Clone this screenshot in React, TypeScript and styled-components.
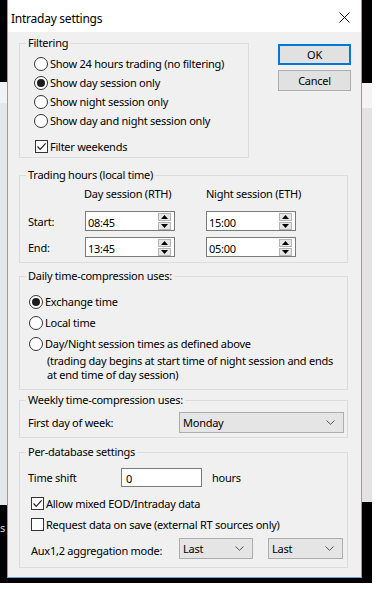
import styled, { createGlobalStyle } from "styled-components";

const GlobalStyle = createGlobalStyle`
  html, body {
    margin: 0;
    padding: 0;
    background: #ffffff;
  }
  body {
    font-family: "Noto Sans", "Liberation Sans", sans-serif;
    font-size: 11px;
    letter-spacing: -0.25px;
    color: #000;
  }
`;

function Radio({ on, label }: { on?: boolean; label: string }) {
  return (
    <OptionRow>
      <RadioCircle $on={on} />
      <span>{label}</span>
    </OptionRow>
  );
}

function Check({ on, label, indent }: { on?: boolean; label: string; indent?: number }) {
  return (
    <OptionRow $indent={indent}>
      <CheckBox>
        {on && (
          <svg width="11" height="11" viewBox="0 0 11 11">
            <path d="M1.5 5.5 L4.2 8.3 L9.6 2.3" fill="none" stroke="#222" strokeWidth="1.2" />
          </svg>
        )}
      </CheckBox>
      <span>{label}</span>
    </OptionRow>
  );
}

function Spin({ value }: { value: string }) {
  return (
    <SpinBox>
      <SpinText>{value}</SpinText>
      <SpinButtons>
        <SpinButton>
          <svg width="7" height="4" viewBox="0 0 7 4">
            <path d="M0 4 L3.5 0 L7 4 Z" fill="#000" />
          </svg>
        </SpinButton>
        <SpinButton>
          <svg width="7" height="4" viewBox="0 0 7 4">
            <path d="M0 0 L3.5 4 L7 0 Z" fill="#000" />
          </svg>
        </SpinButton>
      </SpinButtons>
    </SpinBox>
  );
}

function Combo({ value, width, height }: { value: string; width: number; height: number }) {
  return (
    <ComboBox $w={width} $h={height}>
      <span>{value}</span>
      <svg width="9" height="5" viewBox="0 0 9 5">
        <path d="M0.5 0.5 L4.5 4.3 L8.5 0.5" fill="none" stroke="#555" strokeWidth="1" />
      </svg>
    </ComboBox>
  );
}

export default function App() {
  return (
    <>
      <GlobalStyle />
      <Stage>
        <LeftStrip>
          <StripText>s</StripText>
        </LeftStrip>
        <Window>
          <TitleBar>
            <Title>Intraday settings</Title>
            <Close>
              <svg width="11" height="11" viewBox="0 0 11 11">
                <path d="M0.5 0.5 L10.5 10.5 M10.5 0.5 L0.5 10.5" stroke="#111" strokeWidth="1" />
              </svg>
            </Close>
          </TitleBar>
          <Body>
            <TopRow>
              <Group $w={230} $mt={0} $pl={14} $pb={1}>
                <Legend $pl={14}>Filtering</Legend>
                <Stack $mt={3} $gap={0}>
                  <Radio label="Show 24 hours trading (no filtering)" />
                  <Radio on label="Show day session only" />
                  <Radio label="Show night session only" />
                  <Radio label="Show day and night session only" />
                </Stack>
                <Stack $mt={7} $gap={0}>
                  <Check on label="Filter weekends" indent={1} />
                </Stack>
              </Group>
              <Buttons>
                <Button $default>OK</Button>
                <Button>Cancel</Button>
              </Buttons>
            </TopRow>

            <Group $w={329} $mt={9} $pl={8} $pb={5}>
              <Legend $pl={8}>Trading hours (local time)</Legend>
              <HoursHead>
                <span />
                <span>Day session (RTH)</span>
                <span>Night session (ETH)</span>
              </HoursHead>
              <HoursGrid>
                <span>Start:</span>
                <Spin value="08:45" />
                <Spin value="15:00" />
                <span>End:</span>
                <Spin value="13:45" />
                <Spin value="05:00" />
              </HoursGrid>
            </Group>

            <Group $w={329} $mt={5} $pl={9} $pb={7}>
              <Legend $pl={9}>Daily time-compression uses:</Legend>
              <Stack $mt={8} $gap={2}>
                <Radio on label="Exchange time" />
                <Radio label="Local time" />
                <Radio label="Day/Night session times as defined above" />
              </Stack>
              <Note>
                (trading day begins at start time of night session and ends
                <br />
                at end time of day session)
              </Note>
            </Group>

            <Group $w={329} $mt={2} $pl={8} $pb={4}>
              <Legend $pl={8}>Weekly time-compression uses:</Legend>
              <FieldRow $mt={4}>
                <FieldLabel $w={151}>First day of week:</FieldLabel>
                <Combo value="Monday" width={165} height={21} />
              </FieldRow>
            </Group>

            <Group $w={329} $mt={6} $pl={8} $pb={8}>
              <Legend $pl={8}>Per-database settings</Legend>
              <FieldRow $mt={8}>
                <FieldLabel $w={93}>Time shift</FieldLabel>
                <TextBox>0</TextBox>
                <Unit>hours</Unit>
              </FieldRow>
              <Stack $mt={7} $gap={2}>
                <Check on label="Allow mixed EOD/Intraday data" indent={3} />
                <Check label="Request data on save (external RT sources only)" indent={3} />
              </Stack>
              <FieldRow $mt={4}>
                <FieldLabel $w={151} $indent={3} $shift={3}>
                  Aux1,2 aggregation mode:
                </FieldLabel>
                <Combo value="Last" width={74} height={21} />
                <Spacer />
                <Combo value="Last" width={75} height={21} />
              </FieldRow>
            </Group>
          </Body>
        </Window>
        <RightStrip />
      </Stage>
    </>
  );
}

const Stage = styled.div`
  display: grid;
  grid-template-columns: 7px 355px 10px;
  height: 583px;
  width: 372px;
  background: #000;
`;

const LeftStrip = styled.div`
  position: relative;
  overflow: hidden;
  background: linear-gradient(
    to bottom,
    #000 0,
    #000 82px,
    #f2f2f2 82px,
    #f2f2f2 103px,
    #e6e6e6 103px,
    #e6e6e6 505px,
    #000 505px
  );
`;

const StripText = styled.span`
  position: absolute;
  top: 520px;
  left: 0;
  color: #ddd;
  font-size: 11px;
`;

const RightStrip = styled.div`
  background: linear-gradient(
    to bottom,
    #000 0,
    #000 83px,
    #f3f3f3 83px,
    #f3f3f3 108px,
    #e3e3e3 108px,
    #e3e3e3 502px,
    #000 502px
  );
`;

const Window = styled.div`
  box-sizing: border-box;
  height: 578px;
  border: 1px solid #6ea7d6;
  border-top: none;
  background: #f0f0f0;
  display: flex;
  flex-direction: column;
`;

const TitleBar = styled.div`
  height: 32px;
  background: #fff;
  display: flex;
  align-items: center;
  justify-content: space-between;
  padding: 0 11px 0 3px;
`;

const Title = styled.span`
  font-size: 12px;
  margin-top: 4px;
`;

const Close = styled.span`
  display: flex;
  margin-top: 3px;
`;

const Body = styled.div`
  padding: 3px 0 0 11px;
  display: flex;
  flex-direction: column;
`;

const TopRow = styled.div`
  display: flex;
  align-items: flex-start;
  gap: 29px;
`;

const Buttons = styled.div`
  display: flex;
  flex-direction: column;
  gap: 5px;
  margin-top: 9px;
`;

const Button = styled.div<{ $default?: boolean }>`
  box-sizing: border-box;
  width: 73px;
  height: 21px;
  display: flex;
  align-items: center;
  justify-content: center;
  background: #e1e1e1;
  border: ${(p) => (p.$default ? "2px solid #0078d7" : "1px solid #adadad")};
`;

const Group = styled.fieldset<{ $w: number; $mt: number; $pl: number; $pb: number }>`
  box-sizing: border-box;
  width: ${(p) => p.$w}px;
  margin: ${(p) => p.$mt}px 0 0 0;
  padding: 0 0 ${(p) => p.$pb}px ${(p) => p.$pl}px;
  border: 1px solid #dcdcdc;
  min-width: 0;
`;

const Legend = styled.legend<{ $pl: number }>`
  padding: 0 2px;
  margin-left: ${(p) => 6 - p.$pl}px;
  line-height: 16px;
  font-size: 11px;
`;

const Stack = styled.div<{ $mt: number; $gap: number }>`
  display: flex;
  flex-direction: column;
  gap: ${(p) => p.$gap}px;
  margin-top: ${(p) => p.$mt}px;
`;

const OptionRow = styled.div<{ $indent?: number }>`
  display: flex;
  align-items: center;
  gap: 2px;
  height: 19px;
  white-space: nowrap;
  padding-left: ${(p) => p.$indent ?? 0}px;
`;

const RadioCircle = styled.span<{ $on?: boolean }>`
  box-sizing: border-box;
  width: 14px;
  height: 14px;
  border-radius: 50%;
  border: 1px solid #333;
  background: #fff;
  display: flex;
  align-items: center;
  justify-content: center;
  flex: none;

  &::after {
    content: "";
    width: 8px;
    height: 8px;
    border-radius: 50%;
    background: #1c1c1c;
    display: ${(p) => (p.$on ? "block" : "none")};
  }
`;

const CheckBox = styled.span`
  box-sizing: border-box;
  width: 13px;
  height: 13px;
  border: 1px solid #333;
  background: #fff;
  display: flex;
  align-items: center;
  justify-content: center;
  flex: none;
`;

const HoursHead = styled.div`
  display: grid;
  grid-template-columns: 56px 122px 120px;
  height: 16px;
  align-items: center;
  margin-top: 2px;
  white-space: nowrap;
`;

const HoursGrid = styled.div`
  display: grid;
  grid-template-columns: 57px 121px 90px;
  grid-auto-rows: 20px;
  row-gap: 6px;
  margin-top: 10px;
  align-items: center;
`;

const SpinBox = styled.div`
  box-sizing: border-box;
  width: 90px;
  height: 20px;
  border: 1px solid #7a7a7a;
  background: #fff;
  display: flex;
  align-items: center;
  justify-content: space-between;
  padding: 0 3px 0 2px;
`;

const SpinText = styled.span`
  margin-top: 2px;
`;

const SpinButtons = styled.div`
  display: flex;
  flex-direction: column;
  gap: 1px;
`;

const SpinButton = styled.span`
  box-sizing: border-box;
  width: 13px;
  height: 8px;
  background: #e6e6e6;
  border: 1px solid #b4b4b4;
  display: flex;
  align-items: center;
  justify-content: center;
`;

const Note = styled.div`
  margin: 1px 0 0 18px;
  line-height: 14px;
  white-space: nowrap;
`;

const FieldRow = styled.div<{ $mt: number }>`
  display: flex;
  align-items: center;
  margin-top: ${(p) => p.$mt}px;
  white-space: nowrap;
`;

const FieldLabel = styled.span<{ $w: number; $indent?: number; $shift?: number }>`
  width: ${(p) => p.$w}px;
  padding-left: ${(p) => p.$indent ?? 0}px;
  margin-top: ${(p) => p.$shift ?? 0}px;
  box-sizing: border-box;
  flex: none;
`;

const ComboBox = styled.div<{ $w: number; $h: number }>`
  box-sizing: border-box;
  width: ${(p) => p.$w}px;
  height: ${(p) => p.$h}px;
  background: #e5e5e5;
  border: 1px solid #adadad;
  display: flex;
  align-items: center;
  justify-content: space-between;
  padding: 0 8px 0 3px;
  flex: none;
`;

const TextBox = styled.div`
  box-sizing: border-box;
  width: 81px;
  height: 19px;
  border: 1px solid #7a7a7a;
  background: #fff;
  padding: 2px 0 0 4px;
  flex: none;
`;

const Unit = styled.span`
  margin-left: 10px;
`;

const Spacer = styled.span`
  width: 15px;
  flex: none;
`;
